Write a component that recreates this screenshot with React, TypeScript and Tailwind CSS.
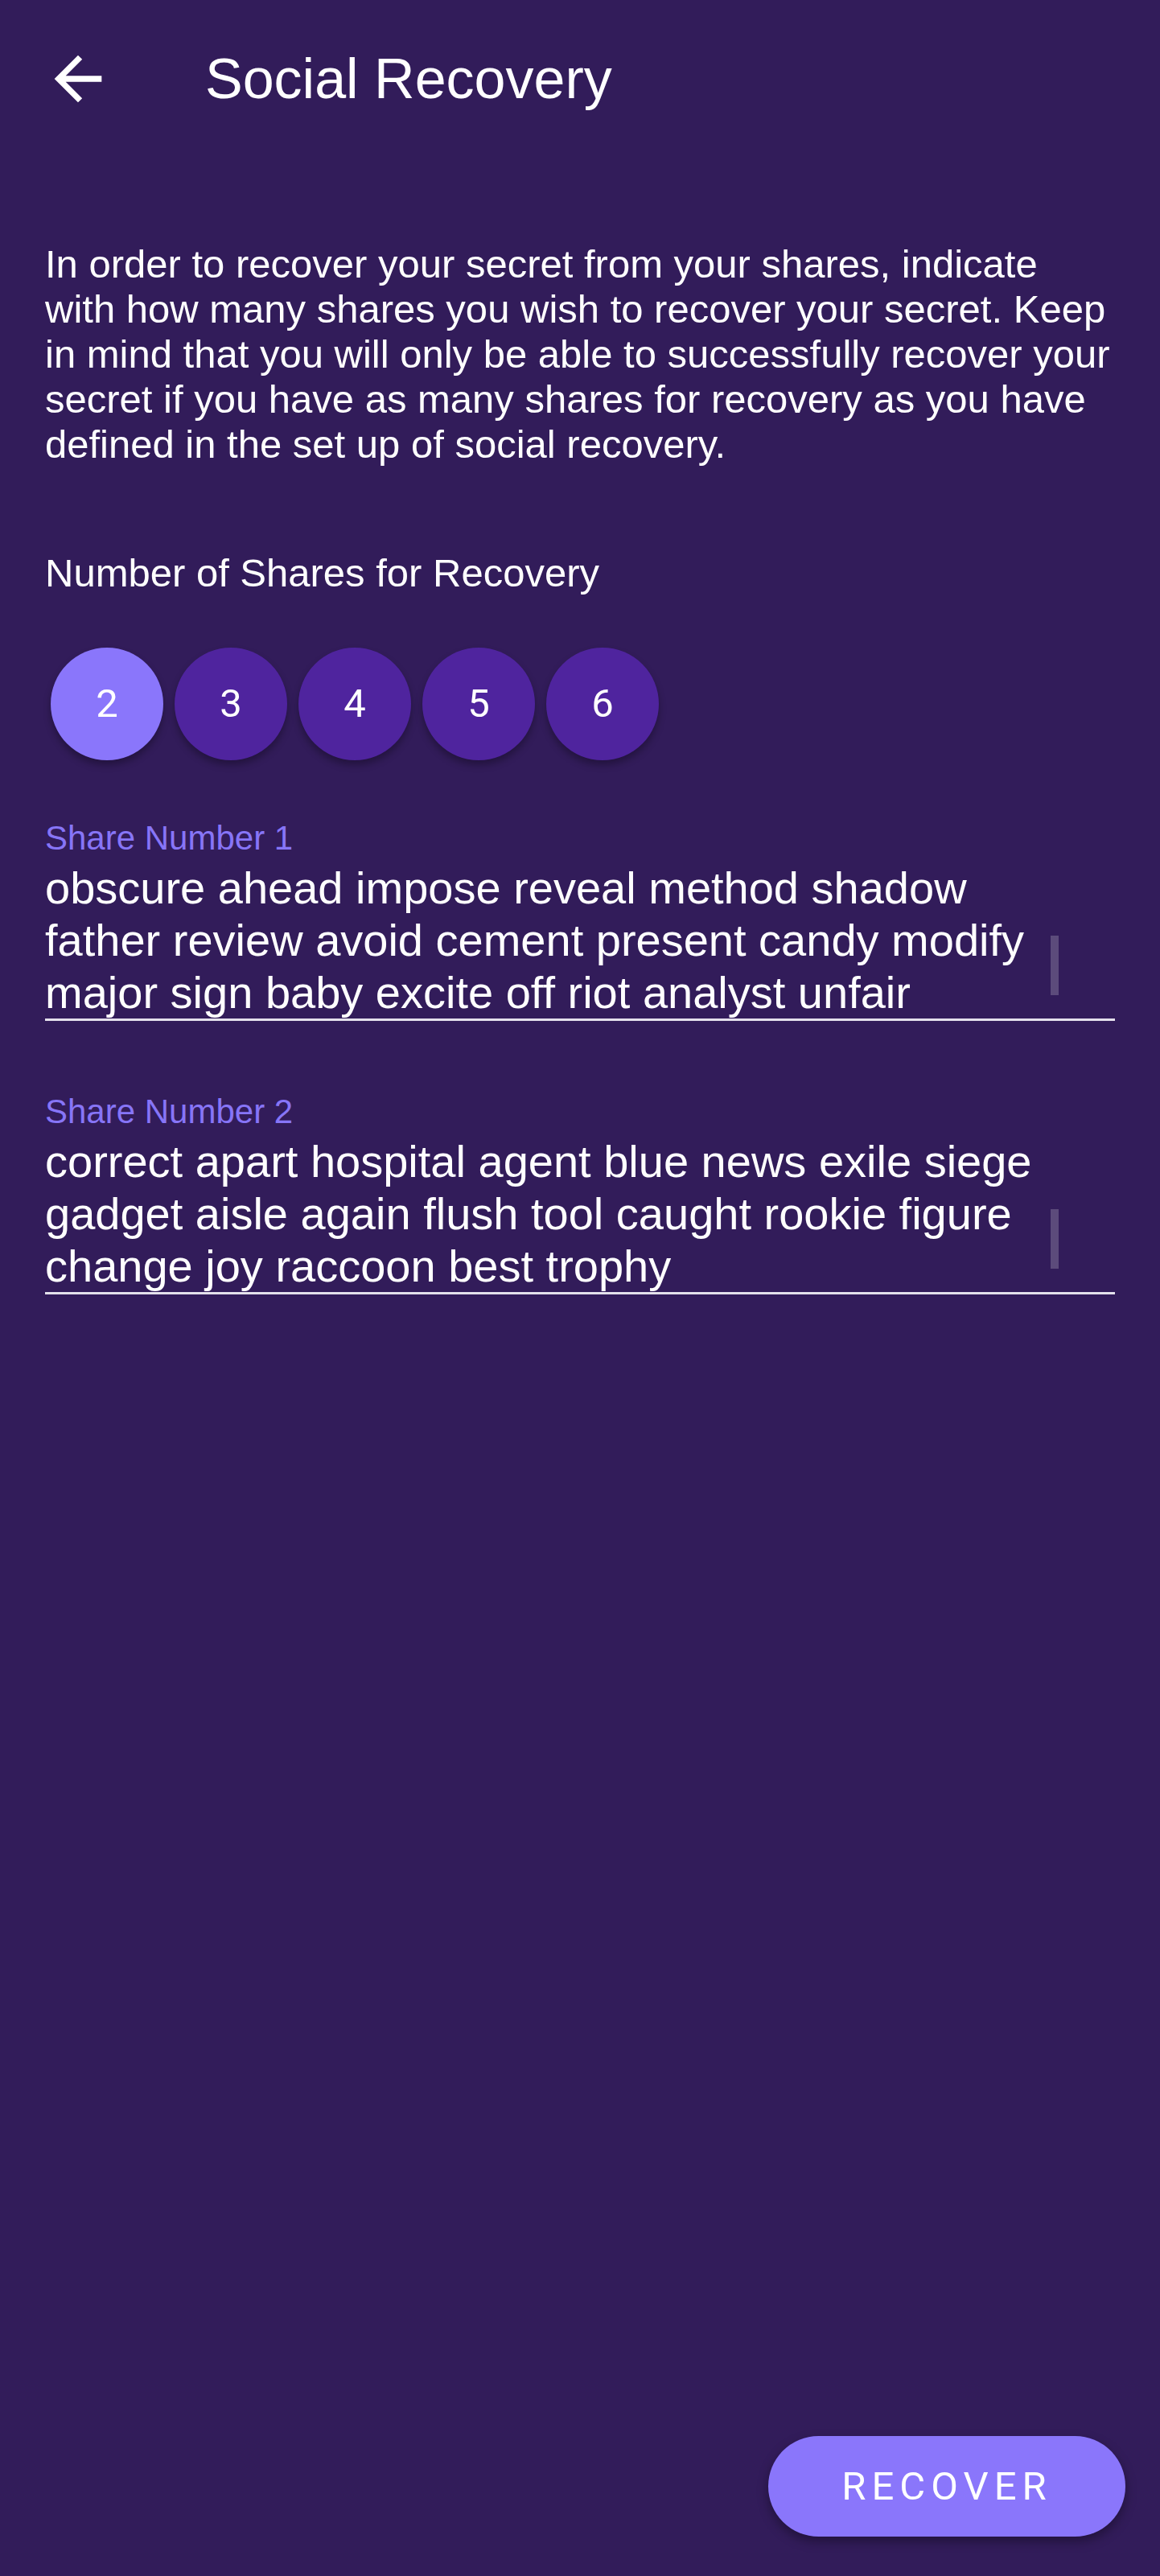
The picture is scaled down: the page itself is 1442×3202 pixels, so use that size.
const shares = [
  {
    label: "Share Number 1",
    words:
      "obscure ahead impose reveal method shadow father review avoid cement present candy modify major sign baby excite off riot analyst unfair",
  },
  {
    label: "Share Number 2",
    words:
      "correct apart hospital agent blue news exile siege gadget aisle again flush tool caught rookie figure change joy raccoon best trophy",
  },
];

function BackArrow() {
  return (
    <svg viewBox="0 0 24 24" className="w-[88px] h-[88px] fill-white">
      <path d="M20 11H7.83l5.59-5.59L12 4l-8 8 8 8 1.41-1.41L7.83 13H20v-2z" />
    </svg>
  );
}

function ShareField({ label, words }: { label: string; words: string }) {
  return (
    <div className="flex flex-col">
      <span className="text-[42px] leading-[48px] text-[#8775f7]">{label}</span>
      <div className="relative mt-[5px] border-b-[3px] border-[#e4e0ec] pr-[50px]">
        <p className="text-[56px] leading-[65px] text-white">{words}</p>
        {/* textarea scroll thumb */}
        <div className="absolute right-[70px] top-[92px] w-[10px] h-[74px] bg-[#5c4b7b]" />
      </div>
    </div>
  );
}

export default function App() {
  return (
    <div className="min-h-[3202px] flex flex-col bg-[#321c5a] font-['Liberation_Sans',Arial,sans-serif]">
      <header className="h-[196px] flex items-center pl-[53px]">
        <BackArrow />
        <h1 className="ml-[114px] text-[70px] leading-[80px] text-white">Social Recovery</h1>
      </header>

      <main className="px-[56px] flex flex-col">
        <p className="mt-[104px] text-[49px] leading-[56px] text-white">
          In order to recover your secret from your shares, indicate with how
          many shares you wish to recover your secret. Keep in mind that you
          will only be able to successfully recover your secret if you have as
          many shares for recovery as you have defined in the set up of social
          recovery.
        </p>

        <h2 className="mt-[104px] text-[49px] leading-[56px] text-white">
          Number of Shares for Recovery
        </h2>

        <div className="mt-[65px] ml-[7px] flex gap-[14px]">
          {[2, 3, 4, 5, 6].map((n) => (
            <button
              key={n}
              className={
                "w-[140px] h-[140px] rounded-full flex items-center justify-center text-[49px] text-white font-['Roboto',sans-serif] shadow-[0_6px_10px_rgba(0,0,0,0.3)] " +
                (n === 2 ? "bg-[#8a76fb]" : "bg-[#4f249e]")
              }
            >
              {n}
            </button>
          ))}
        </div>

        <div className="mt-[73px] flex flex-col gap-[89px]">
          {shares.map((s) => (
            <ShareField key={s.label} label={s.label} words={s.words} />
          ))}
        </div>
      </main>

      <div className="mt-auto flex justify-end pr-[43px] pb-[49px]">
        <button className="w-[444px] h-[125px] rounded-full bg-[#8a76fb] text-white text-[49px] tracking-[7px] font-['Roboto',sans-serif] shadow-[0_6px_14px_rgba(0,0,0,0.35)]">
          RECOVER
        </button>
      </div>
    </div>
  );
}
